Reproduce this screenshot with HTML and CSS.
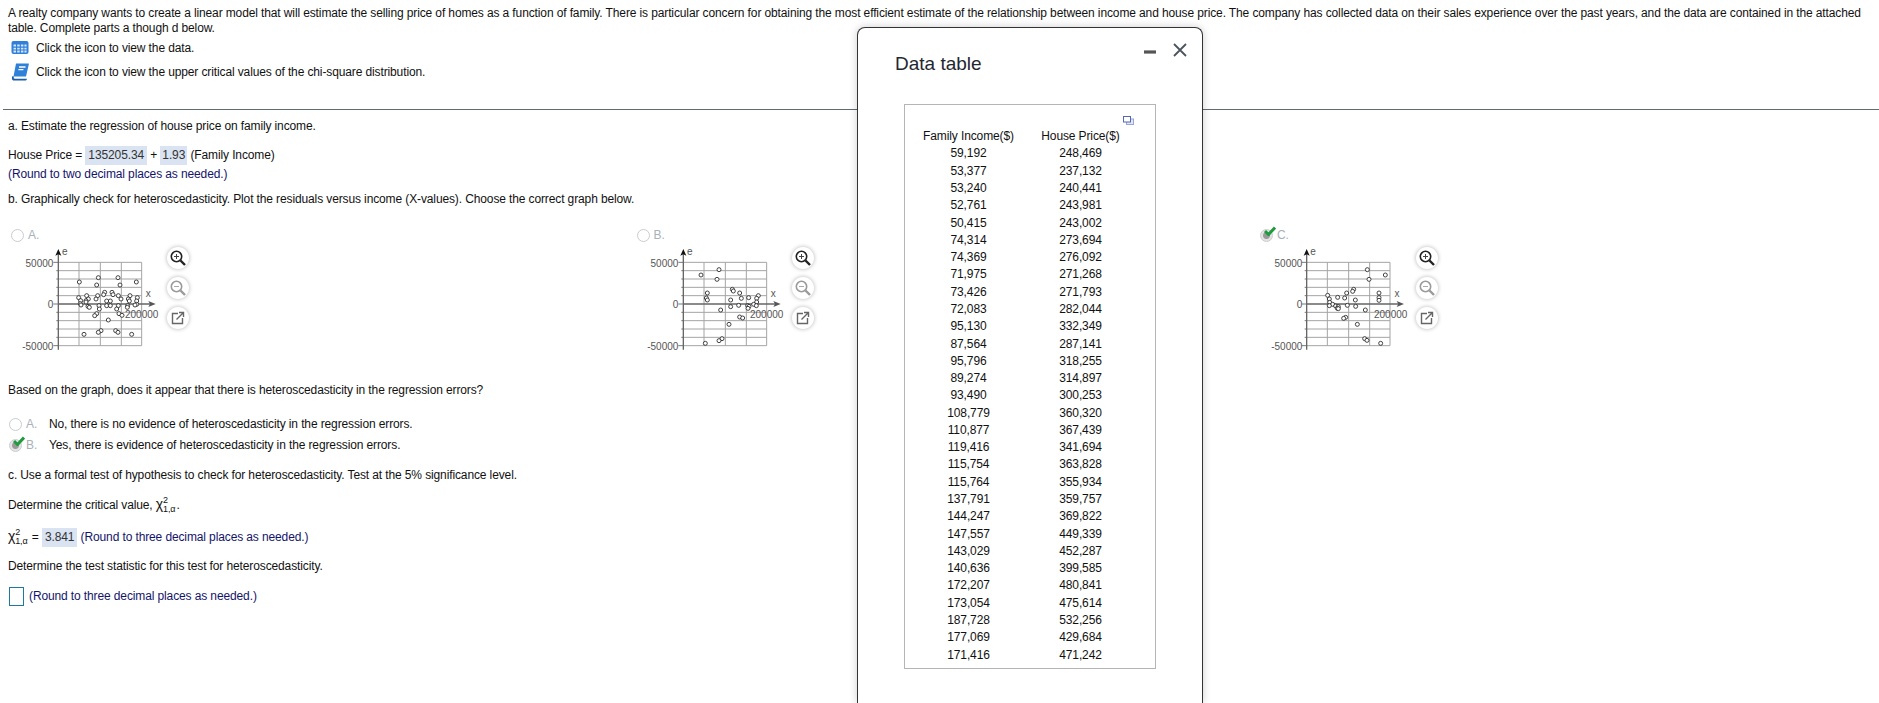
FILE: index.html
```html
<!DOCTYPE html>
<html lang="en">
<head>
    <meta charset="UTF-8">
    <title>Heteroscedasticity question</title>
    <link rel="stylesheet" href="styles.css">
</head>
<body>

    <div class="question-head">
        <p class="intro">A realty company wants to create a linear model that will estimate the selling price of homes as a function of family. There is particular concern for obtaining the most efficient estimate of the relationship between income and house price. The company has collected data on their sales experience over the past years, and the data are contained in the attached table. Complete parts a though d below.</p>
        <div class="resource">
            <svg class="resource-icon" viewBox="0 0 18 18" width="18" height="18">
                <rect x="0.5" y="2" width="17" height="13" rx="2" fill="#2f80d8"/>
                <path d="M2.5 5.5h2.5v2h-2.5zM6.2 5.5h2.5v2h-2.5zM9.9 5.5h2.5v2h-2.5zM13.4 5.5h2.2v2h-2.2zM2.5 8.7h2.5v1.8h-2.5zM6.2 8.7h2.5v1.8h-2.5zM9.9 8.7h2.5v1.8h-2.5zM13.4 8.7h2.2v1.8h-2.2zM2.5 11.6h2.5v1.8h-2.5zM6.2 11.6h2.5v1.8h-2.5zM9.9 11.6h2.5v1.8h-2.5zM13.4 11.6h2.2v1.8h-2.2z" fill="#d6e6f8"/>
            </svg>
            <span>Click the icon to view the data.</span>
        </div>
        <div class="resource">
            <svg class="resource-icon" viewBox="0 0 18 18" width="18" height="18">
                <path d="M5 0.5h12.5c.4 0 .5.3.4.6l-2.9 12.4h-12.5z" fill="#2f80d8"/>
                <path d="M2.5 13.5l-1 -0.5c-1 2-.8 4.5 1.500 4.500h11.500c.6 0 1-.3 1.200-.8l.2-.9h-12c-1.200 0-1.500-1-.9-2.300z" fill="#1c5fa8"/>
                <path d="M8 4h6.500M7.400 6.600h5" stroke="#ffffff" stroke-width="1.300" fill="none"/>
            </svg>
            <span>Click the icon to view the upper critical values of the chi-square distribution.</span>
        </div>
    </div>

    <div class="question-body">
        <p class="part-a">a. Estimate the regression of house price on family income.</p>
        <p class="equation">House Price = <span class="answer">135205.34</span> <span class="plus">+</span> <span class="answer answer-short">1.93</span> (Family Income)</p>
        <p class="hint hint-block">(Round to two decimal places as needed.)</p>
        <p class="part-b">b. Graphically check for heteroscedasticity. Plot the residuals versus income (X-values). Choose the correct graph below.</p>

        <div class="graph-options">
            <div class="graph-option">
                <div class="choice-label"><span class="radio"></span><span class="letter">A.</span></div>
                <div class="graph-row">
                    <svg class="graph" viewBox="24 75 480 345" width="160" height="115">
                        <defs>
                            <g id="plot-frame">
                                <path class="grid" d="M0 0H250M0 25H250M0 50H250M0 75H250M0 100H250M0 150H250M0 175H250M0 200H250M0 225H250M0 250H250M62 0V250M126 0V250M189 0V250M250 0V250"/>
                                <path class="tick" d="M-15 0H0M-6 25H0M-6 50H0M-6 75H0M-6 100H0M-15 125H0M-6 150H0M-6 175H0M-6 200H0M-6 225H0M-15 250H0"/>
                                <path class="axis" d="M0 262V-25M0 125H278"/>
                                <path class="arrow-y" d="M0 -40L9 -20L0 -24L-9 -20z"/>
                                <path class="arrow-x" d="M292 125L270 116L275 125L270 134z"/>
                            </g>
                        </defs>
                        <use href="#plot-frame" x="175" y="130"/>
                        <text x="186" y="108" class="plot-label">e</text>
                        <text x="160" y="145" class="plot-label end">50000</text>
                        <text x="160" y="267" class="plot-label end">0</text>
                        <text x="160" y="393" class="plot-label end">-50000</text>
                        <text x="445" y="234" class="plot-label mid">x</text>
                        <text x="375" y="298" class="plot-label">200000</text>
                        <g class="points">
                            <circle cx="238" cy="189" r="6"/><circle cx="295" cy="176" r="6"/><circle cx="354" cy="176" r="6"/><circle cx="409" cy="189" r="6"/><circle cx="290" cy="198" r="6"/><circle cx="360" cy="198" r="6"/>
                            <circle cx="314" cy="220" r="6"/><circle cx="336" cy="220" r="6"/><circle cx="311" cy="227" r="6"/><circle cx="339" cy="227" r="6"/><circle cx="260" cy="230" r="6"/><circle cx="293" cy="230" r="6"/><circle cx="355" cy="230" r="6"/><circle cx="390" cy="230" r="6"/>
                            <circle cx="236" cy="236" r="6"/><circle cx="412" cy="236" r="6"/><circle cx="288" cy="240" r="6"/><circle cx="265" cy="240" r="6"/><circle cx="258" cy="245" r="6"/><circle cx="242" cy="245" r="6"/><circle cx="363" cy="240" r="6"/><circle cx="385" cy="240" r="6"/>
                            <circle cx="320" cy="246" r="6"/><circle cx="331" cy="246" r="6"/><circle cx="410" cy="246" r="6"/><circle cx="388" cy="246" r="6"/><circle cx="258" cy="249" r="6"/><circle cx="241" cy="254" r="6"/><circle cx="320" cy="260" r="6"/><circle cx="331" cy="260" r="6"/>
                            <circle cx="297" cy="260" r="6"/><circle cx="355" cy="260" r="6"/><circle cx="383" cy="260" r="6"/><circle cx="410" cy="256" r="6"/><circle cx="405" cy="258" r="6"/><circle cx="243" cy="258" r="6"/><circle cx="264" cy="262" r="6"/><circle cx="268" cy="265" r="6"/>
                            <circle cx="382" cy="265" r="6"/><circle cx="350" cy="270" r="6"/><circle cx="298" cy="270" r="6"/><circle cx="290" cy="284" r="6"/><circle cx="284" cy="290" r="6"/><circle cx="357" cy="284" r="6"/><circle cx="366" cy="289" r="6"/><circle cx="325" cy="303" r="6"/>
                            <circle cx="303" cy="335" r="6"/><circle cx="295" cy="340" r="6"/><circle cx="347" cy="335" r="6"/><circle cx="354" cy="340" r="6"/><circle cx="252" cy="346" r="6"/><circle cx="395" cy="346" r="6"/>
                        </g>
                    </svg>
                    <div class="graph-tools">
                        <div class="tool"><svg viewBox="0 0 22 22" width="22" height="22"><circle cx="9.500" cy="9.500" r="5.200" class="lens-dark"/><path d="M13.500 13.500L18 18" class="handle-dark"/><path d="M7 9.500h5M9.500 7v5" class="plus-dark"/></svg></div>
                        <div class="tool"><svg viewBox="0 0 22 22" width="22" height="22"><circle cx="9.500" cy="9.500" r="5.200" class="lens-light"/><path d="M13.500 13.500L18 18" class="handle-light"/><path d="M7 9.500h5" class="plus-light"/></svg></div>
                        <div class="tool"><svg viewBox="0 0 22 22" width="22" height="22"><path d="M11 6.500H5.500V16.500H15.500V11" class="popout"/><path d="M9.500 12.500L16 6M12 5.500h4.500V10" class="popout"/></svg></div>
                    </div>
                </div>
            </div>

            <div class="graph-option">
                <div class="choice-label choice-label-b"><span class="radio"></span><span class="letter">B.</span></div>
                <div class="graph-row">
                    <svg class="graph" viewBox="36 75 480 345" width="160" height="115">
                        <use href="#plot-frame" x="187" y="130"/>
                        <text x="198" y="108" class="plot-label">e</text>
                        <text x="172" y="145" class="plot-label end">50000</text>
                        <text x="172" y="267" class="plot-label end">0</text>
                        <text x="172" y="393" class="plot-label end">-50000</text>
                        <text x="457" y="234" class="plot-label mid">x</text>
                        <text x="387" y="298" class="plot-label">200000</text>
                        <g class="points">
                            <circle cx="294" cy="152" r="6"/><circle cx="240" cy="168" r="6"/><circle cx="288" cy="181" r="6"/><circle cx="334" cy="211" r="6"/><circle cx="337" cy="216" r="6"/><circle cx="259" cy="222" r="6"/><circle cx="356" cy="222" r="6"/><circle cx="361" cy="238" r="6"/>
                            <circle cx="383" cy="236" r="6"/><circle cx="412" cy="230" r="6"/><circle cx="407" cy="238" r="6"/><circle cx="256" cy="237" r="6"/><circle cx="259" cy="243" r="6"/><circle cx="329" cy="243" r="6"/><circle cx="407" cy="249" r="6"/><circle cx="398" cy="256" r="6"/>
                            <circle cx="406" cy="260" r="6"/><circle cx="329" cy="263" r="6"/><circle cx="353" cy="259" r="6"/><circle cx="380" cy="260" r="6"/><circle cx="384" cy="262" r="6"/><circle cx="381" cy="268" r="6"/><circle cx="299" cy="273" r="6"/><circle cx="356" cy="294" r="6"/>
                            <circle cx="365" cy="297" r="6"/><circle cx="324" cy="316" r="6"/><circle cx="303" cy="359" r="6"/><circle cx="294" cy="365" r="6"/><circle cx="253" cy="373" r="6"/>
                        </g>
                    </svg>
                    <div class="graph-tools">
                        <div class="tool"><svg viewBox="0 0 22 22" width="22" height="22"><circle cx="9.500" cy="9.500" r="5.200" class="lens-dark"/><path d="M13.500 13.500L18 18" class="handle-dark"/><path d="M7 9.500h5M9.500 7v5" class="plus-dark"/></svg></div>
                        <div class="tool"><svg viewBox="0 0 22 22" width="22" height="22"><circle cx="9.500" cy="9.500" r="5.200" class="lens-light"/><path d="M13.500 13.500L18 18" class="handle-light"/><path d="M7 9.500h5" class="plus-light"/></svg></div>
                        <div class="tool"><svg viewBox="0 0 22 22" width="22" height="22"><path d="M11 6.500H5.500V16.500H15.500V11" class="popout"/><path d="M9.500 12.500L16 6M12 5.500h4.500V10" class="popout"/></svg></div>
                    </div>
                </div>
            </div>

            <div class="graph-option">
                <div class="choice-label"><span class="radio radio-correct"><svg class="check" viewBox="0 0 12 10" width="12" height="10"><path d="M1 5l3.500 3.500L11 1.500" /></svg></span><span class="letter">C.</span></div>
                <div class="graph-row">
                    <svg class="graph" viewBox="51 90 480 345" width="160" height="115">
                        <use href="#plot-frame" x="200" y="145"/>
                        <text x="211" y="123" class="plot-label">e</text>
                        <text x="187" y="160" class="plot-label end">50000</text>
                        <text x="187" y="282" class="plot-label end">0</text>
                        <text x="187" y="408" class="plot-label end">-50000</text>
                        <text x="471" y="249" class="plot-label mid">x</text>
                        <text x="402" y="313" class="plot-label">200000</text>
                        <g class="points">
                            <circle cx="382" cy="167" r="6"/><circle cx="436" cy="183" r="6"/><circle cx="387" cy="196" r="6"/><circle cx="341" cy="226" r="6"/><circle cx="338" cy="232" r="6"/><circle cx="320" cy="237" r="6"/><circle cx="263" cy="244" r="6"/><circle cx="293" cy="250" r="6"/>
                            <circle cx="314" cy="252" r="6"/><circle cx="417" cy="237" r="6"/><circle cx="417" cy="251" r="6"/><circle cx="417" cy="259" r="6"/><circle cx="268" cy="255" r="6"/><circle cx="346" cy="258" r="6"/><circle cx="269" cy="265" r="6"/><circle cx="278" cy="271" r="6"/>
                            <circle cx="268" cy="275" r="6"/><circle cx="287" cy="276" r="6"/><circle cx="295" cy="278" r="6"/><circle cx="292" cy="283" r="6"/><circle cx="295" cy="284" r="6"/><circle cx="322" cy="274" r="6"/><circle cx="347" cy="277" r="6"/><circle cx="376" cy="288" r="6"/>
                            <circle cx="317" cy="310" r="6"/><circle cx="311" cy="313" r="6"/><circle cx="352" cy="331" r="6"/><circle cx="374" cy="374" r="6"/><circle cx="381" cy="379" r="6"/><circle cx="422" cy="388" r="6"/>
                        </g>
                    </svg>
                    <div class="graph-tools">
                        <div class="tool"><svg viewBox="0 0 22 22" width="22" height="22"><circle cx="9.500" cy="9.500" r="5.200" class="lens-dark"/><path d="M13.500 13.500L18 18" class="handle-dark"/><path d="M7 9.500h5M9.500 7v5" class="plus-dark"/></svg></div>
                        <div class="tool"><svg viewBox="0 0 22 22" width="22" height="22"><circle cx="9.500" cy="9.500" r="5.200" class="lens-light"/><path d="M13.500 13.500L18 18" class="handle-light"/><path d="M7 9.500h5" class="plus-light"/></svg></div>
                        <div class="tool"><svg viewBox="0 0 22 22" width="22" height="22"><path d="M11 6.500H5.500V16.500H15.500V11" class="popout"/><path d="M9.500 12.500L16 6M12 5.500h4.500V10" class="popout"/></svg></div>
                    </div>
                </div>
            </div>
        </div>

        <p class="based-on">Based on the graph, does it appear that there is heteroscedasticity in the regression errors?</p>
        <div class="choice choice-first"><span class="radio"></span><span class="letter">A.</span><span>No, there is no evidence of heteroscedasticity in the regression errors.</span></div>
        <div class="choice"><span class="radio radio-correct"><svg class="check" viewBox="0 0 12 10" width="12" height="10"><path d="M1 5l3.500 3.500L11 1.500" /></svg></span><span class="letter">B.</span><span>Yes, there is evidence of heteroscedasticity in the regression errors.</span></div>

        <p class="part-c">c. Use a formal test of hypothesis to check for heteroscedasticity. Test at the 5% significance level.</p>
        <p class="critical">Determine the critical value, <span class="chi">χ<span class="scripts"><span>2</span><span>1,α</span></span></span>.</p>
        <p class="critical-answer"><span class="chi">χ<span class="scripts"><span>2</span><span>1,α</span></span></span> = <span class="answer">3.841</span> <span class="hint">(Round to three decimal places as needed.)</span></p>
        <p class="statistic">Determine the test statistic for this test for heteroscedasticity.</p>
        <div class="entry-row"><span class="entry-box"></span><span class="hint">(Round to three decimal places as needed.)</span></div>
    </div>

    <div class="modal">
        <div class="modal-head">
            <div class="modal-title">Data table</div>
            <svg class="modal-controls" viewBox="0 0 44 14" width="44" height="14">
                <path d="M1 9h12" stroke="#555555" stroke-width="3.200"/>
                <path d="M31 1l12 12M43 1L31 13" stroke="#4a5560" stroke-width="1.800" fill="none"/>
            </svg>
        </div>
        <div class="table-box">
            <div class="table-tools">
                <svg viewBox="0 0 11 9" width="11" height="9">
                    <rect x="3.500" y="3" width="7" height="5.500" fill="#e3e6f4" stroke="#9aa6d6"/>
                    <rect x="0.500" y="0.500" width="7" height="5.500" fill="#ffffff" stroke="#5566bb"/>
                </svg>
            </div>
            <table class="data-table">
                <tr><th>Family Income($)</th><th>House Price($)</th></tr>
                <tr><td>59,192</td><td>248,469</td></tr>
                <tr><td>53,377</td><td>237,132</td></tr>
                <tr><td>53,240</td><td>240,441</td></tr>
                <tr><td>52,761</td><td>243,981</td></tr>
                <tr><td>50,415</td><td>243,002</td></tr>
                <tr><td>74,314</td><td>273,694</td></tr>
                <tr><td>74,369</td><td>276,092</td></tr>
                <tr><td>71,975</td><td>271,268</td></tr>
                <tr><td>73,426</td><td>271,793</td></tr>
                <tr><td>72,083</td><td>282,044</td></tr>
                <tr><td>95,130</td><td>332,349</td></tr>
                <tr><td>87,564</td><td>287,141</td></tr>
                <tr><td>95,796</td><td>318,255</td></tr>
                <tr><td>89,274</td><td>314,897</td></tr>
                <tr><td>93,490</td><td>300,253</td></tr>
                <tr><td>108,779</td><td>360,320</td></tr>
                <tr><td>110,877</td><td>367,439</td></tr>
                <tr><td>119,416</td><td>341,694</td></tr>
                <tr><td>115,754</td><td>363,828</td></tr>
                <tr><td>115,764</td><td>355,934</td></tr>
                <tr><td>137,791</td><td>359,757</td></tr>
                <tr><td>144,247</td><td>369,822</td></tr>
                <tr><td>147,557</td><td>449,339</td></tr>
                <tr><td>143,029</td><td>452,287</td></tr>
                <tr><td>140,636</td><td>399,585</td></tr>
                <tr><td>172,207</td><td>480,841</td></tr>
                <tr><td>173,054</td><td>475,614</td></tr>
                <tr><td>187,728</td><td>532,256</td></tr>
                <tr><td>177,069</td><td>429,684</td></tr>
                <tr><td>171,416</td><td>471,242</td></tr>
            </table>
        </div>
    </div>

</body>
</html>
```

FILE: styles.css
```css
html, body {
    height: 703px;
    overflow: hidden;
}

body {
    margin: 0;
    background-color: #ffffff;
    color: #111111;
    font-family: "Liberation Sans", Arial, sans-serif;
    font-size: 12px;
    letter-spacing: -0.12px;
    line-height: 15px;
    position: relative;
}

p {
    margin: 0;
}

/* Top part, down to the dark rule */
.question-head {
    margin-left: 3px;
    padding: 6px 14px 25px 5px;
    border-bottom: 1px solid #5f6a72;
}

.resource {
    display: flex;
    align-items: center;
    height: 24px;
    gap: 7px;
    padding-left: 3px;
}

.resource-icon {
    flex: none;
}

.question-body {
    padding: 9px 0 0 8px;
}

.equation {
    margin-top: 12px;
    height: 19px;
    line-height: 19px;
}

.answer {
    display: inline-block;
    background-color: #d9e3f1;
    color: #333333;
    padding: 0 3px;
    height: 19px;
    line-height: 19px;
}

.answer-short {
    padding: 0 2px;
}

.hint {
    color: #14146a;
}

.hint-block {
    margin-top: 2px;
}

.part-b {
    margin-top: 10px;
}

/* The three residual plots */
.graph-options {
    display: grid;
    grid-template-columns: repeat(3, 624.5px);
    margin-top: 21px;
}

.choice-label {
    display: flex;
    align-items: center;
    height: 15px;
    padding-left: 3px;
}

.choice-label-b {
    padding-left: 4px;
}

.letter {
    color: #a9b1ba;
    margin-left: 4px;
    width: 22px;
}

.choice .letter {
    width: 23px;
}

.radio {
    position: relative;
    flex: none;
    width: 13px;
    height: 13px;
    border: 1px solid #c9cccf;
    border-radius: 50%;
    background-color: #ffffff;
    box-sizing: border-box;
}

.radio-correct {
    background: radial-gradient(circle, #9a9a9a 0, #9a9a9a 3px, #e4e4e4 4px);
}

.check {
    position: absolute;
    left: 3px;
    top: -4px;
    fill: none;
    stroke: #1f9a3c;
    stroke-width: 3;
}

.graph-row {
    display: flex;
    margin-top: 1px;
}

.graph {
    flex: none;
    display: block;
}

.graph-tools {
    display: flex;
    flex-direction: column;
    gap: 8px;
    margin: 3px 0 0 -1px;
}

.tool {
    width: 22px;
    height: 22px;
    border-radius: 50%;
    background-color: #ffffff;
    box-shadow: 0 0 4px rgba(0, 0, 0, 0.3);
}

.tool svg {
    display: block;
}

.lens-dark, .lens-light, .handle-dark, .handle-light, .plus-dark, .plus-light, .popout {
    fill: none;
}

.lens-dark {
    stroke: #222222;
    stroke-width: 1.6;
}

.handle-dark {
    stroke: #222222;
    stroke-width: 2.4;
}

.plus-dark {
    stroke: #444444;
    stroke-width: 1;
}

.lens-light {
    stroke: #9a9a9a;
    stroke-width: 1.6;
}

.handle-light {
    stroke: #9a9a9a;
    stroke-width: 2.4;
}

.plus-light {
    stroke: #aaaaaa;
    stroke-width: 1;
}

.popout {
    stroke: #666666;
    stroke-width: 1.4;
}

.grid {
    stroke: #a4a4a4;
    stroke-width: 3;
    fill: none;
}

.tick {
    stroke: #777777;
    stroke-width: 3;
    fill: none;
}

.axis {
    stroke: #666666;
    stroke-width: 4;
    fill: none;
}

.arrow-y {
    fill: #111111;
}

.arrow-x {
    fill: #555555;
}

.plot-label {
    font-size: 30px;
    fill: #555555;
    letter-spacing: 0;
}

.end {
    text-anchor: end;
}

.mid {
    text-anchor: middle;
}

.points circle {
    fill: #ffffff;
    stroke: #222222;
    stroke-width: 2.5;
}

/* Lower questions */
.based-on {
    margin-top: 24px;
}

.choice {
    display: flex;
    align-items: center;
    height: 21px;
    padding-left: 1px;
}

.choice-first {
    margin-top: 16px;
}

.part-c {
    margin-top: 12px;
}

.critical {
    margin-top: 13px;
    height: 15px;
}

.critical-answer {
    margin-top: 16px;
    height: 19px;
    line-height: 19px;
}

.chi {
    font-size: 14px;
}

.scripts {
    display: inline-flex;
    flex-direction: column;
    vertical-align: middle;
    font-size: 9px;
    line-height: 9px;
    margin: 0 1px 0 0;
}

.statistic {
    margin-top: 13px;
}

.entry-row {
    display: flex;
    align-items: center;
    gap: 5px;
    margin-top: 13px;
    margin-left: 1px;
}

.entry-box {
    width: 15px;
    height: 19px;
    border: 1px solid #1d7a9c;
    box-sizing: border-box;
}

/* Data table window, lies over the question */
.modal {
    position: absolute;
    left: 857px;
    top: 27px;
    width: 346px;
    height: 676px;
    box-sizing: border-box;
    background-color: #ffffff;
    border: 1.5px solid #333333;
    border-bottom: none;
    border-radius: 8px 8px 0 0;
    box-shadow: 0 0 8px rgba(0, 0, 0, 0.2);
}

.modal-head {
    display: flex;
    justify-content: space-between;
    align-items: flex-start;
    padding: 15px 15px 0 37px;
    height: 60px;
    box-sizing: border-box;
}

.modal-title {
    margin-top: 9px;
    font-size: 19px;
    line-height: 24px;
    letter-spacing: 0;
    color: #1f2730;
}

.table-box {
    margin: 16px 0 0 46px;
    width: 252px;
    height: 565px;
    box-sizing: border-box;
    border: 1px solid #b5b5b5;
    padding-top: 11px;
}

.table-tools {
    display: flex;
    justify-content: flex-end;
    padding-right: 21px;
    height: 12px;
}

.data-table {
    border-collapse: collapse;
    margin-left: 16px;
    table-layout: fixed;
    width: 224px;
}

.data-table th, .data-table td {
    padding: 0;
    height: 17.29px;
    font-weight: normal;
    text-align: center;
    color: #111111;
    line-height: 15px;
}

.data-table th:first-child {
    width: 95px;
}
```
